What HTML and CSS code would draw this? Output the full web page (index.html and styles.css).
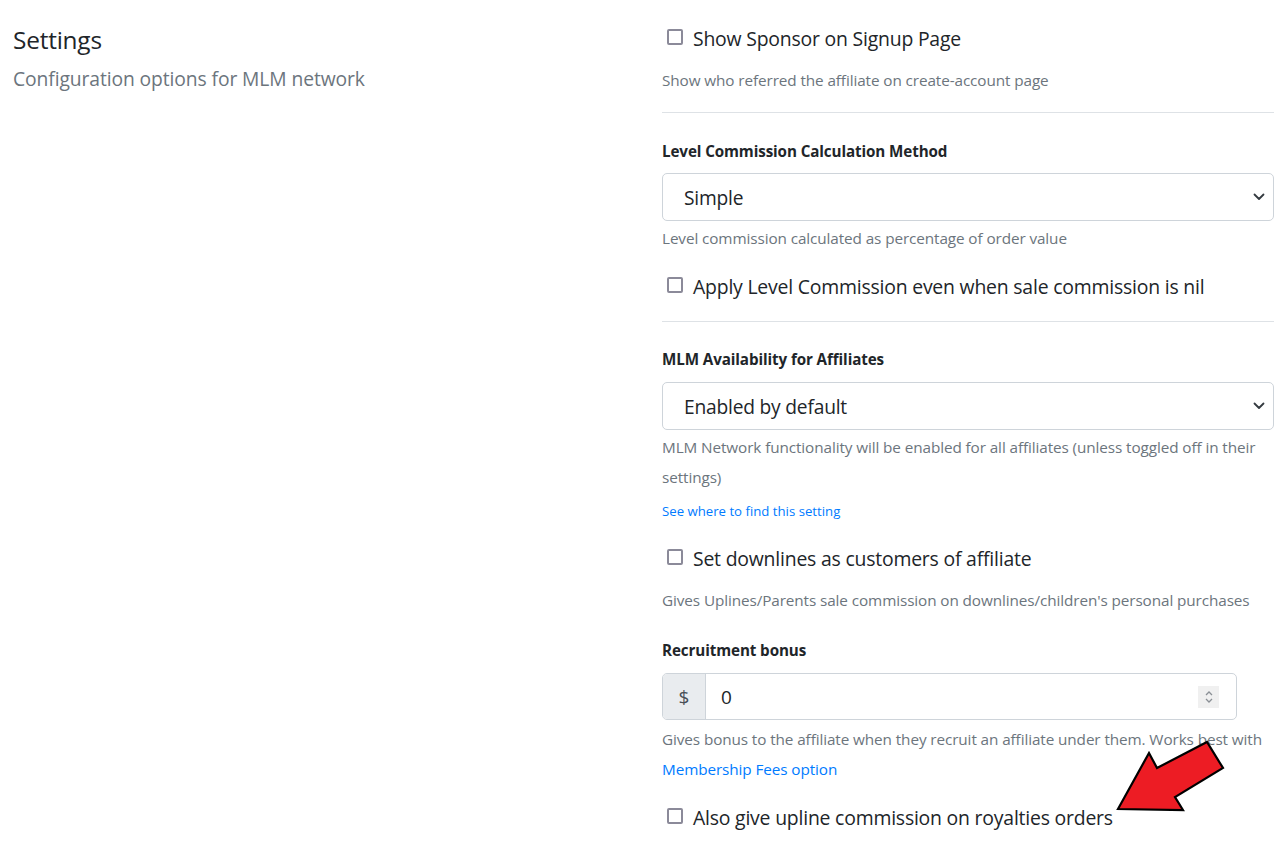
FILE: index.html
```html
<!DOCTYPE html>
<html lang="en">
<head>
<meta charset="utf-8">
<title>Settings</title>
<link rel="stylesheet" href="styles.css">
</head>
<body>
<div class="page">
  <div class="intro">
    <h2 class="title">Settings</h2>
    <p class="subtitle">Configuration options for MLM network</p>
  </div>
  <div class="form">
    <label class="check first"><input type="checkbox" class="box"><span>Show Sponsor on Signup Page</span></label>
    <p class="help h-after-check">Show who referred the affiliate on create-account page</p>
    <hr class="sep sep1">

    <div class="label l1">Level Commission Calculation Method</div>
    <div class="select">
      <span>Simple</span>
      <svg class="chev" width="12" height="8" viewBox="0 0 12 8"><path d="M1.5 1.5 L6 6 L10.5 1.5" fill="none" stroke="#343a40" stroke-width="1.8" stroke-linecap="round" stroke-linejoin="round"/></svg>
    </div>
    <p class="help h-after-input">Level commission calculated as percentage of order value</p>
    <label class="check c2"><input type="checkbox" class="box"><span>Apply Level Commission even when sale commission is nil</span></label>
    <hr class="sep sep2">

    <div class="label l2">MLM Availability for Affiliates</div>
    <div class="select">
      <span>Enabled by default</span>
      <svg class="chev" width="12" height="8" viewBox="0 0 12 8"><path d="M1.5 1.5 L6 6 L10.5 1.5" fill="none" stroke="#343a40" stroke-width="1.8" stroke-linecap="round" stroke-linejoin="round"/></svg>
    </div>
    <p class="help h-after-input">MLM Network functionality will be enabled for all affiliates (unless toggled off in their settings)</p>
    <a class="small-link" href="#">See where to find this setting</a>

    <label class="check c3"><input type="checkbox" class="box"><span>Set downlines as customers of affiliate</span></label>
    <p class="help h-after-check">Gives Uplines/Parents sale commission on downlines/children's personal purchases</p>

    <div class="label l3">Recruitment bonus</div>
    <div class="input-group">
      <span class="addon">$</span>
      <span class="value">0</span>
      <span class="spin">
        <svg width="10" height="16" viewBox="0 0 10 16"><path d="M2 6 L5 3 L8 6" fill="none" stroke="#8a8f95" stroke-width="1.3"/><path d="M2 10 L5 13 L8 10" fill="none" stroke="#8a8f95" stroke-width="1.3"/></svg>
      </span>
    </div>
    <p class="help h-after-group">Gives bonus to the affiliate when they recruit an affiliate under them. Works best with <a class="link" href="#">Membership Fees option</a></p>

    <label class="check c4"><input type="checkbox" class="box"><span>Also give upline commission on royalties orders</span></label>

    <svg class="arrow" width="130" height="80" viewBox="1110 736 130 80">
      <polygon points="1118,809 1149,753 1157,768 1207,742 1223,768 1175,797 1183,810" fill="#ed1c24" stroke="#000" stroke-width="2.2" stroke-linejoin="miter"/>
    </svg>
  </div>
</div>
</body>
</html>
```

FILE: styles.css
```css
html, body {
  margin: 0;
  padding: 0;
  background: #fff;
}
body {
  font-family: "Open Sans", "Noto Sans", "Liberation Sans", sans-serif;
  color: #212529;
}
.page {
  position: relative;
  display: grid;
  grid-template-columns: 1fr 612px;
  column-gap: 25px;
  padding: 0 12px 0 13px;
  min-height: 847px;
  box-sizing: border-box;
}
.title {
  margin: 24px 0 0 0;
  font-size: 24.4px;
  line-height: 32px;
  font-weight: 400;
  letter-spacing: -0.2px;
}
.subtitle {
  margin: 10px 0 0 0;
  font-size: 19.3px;
  line-height: 26px;
  color: #6c757d;
  letter-spacing: -0.1px;
}
.form {
  position: relative;
  padding-top: 24px;
}
.check {
  display: flex;
  align-items: center;
  font-size: 19.4px;
  line-height: 30px;
  height: 30px;
  letter-spacing: -0.2px;
  cursor: pointer;
}
.box {
  appearance: none;
  -webkit-appearance: none;
  width: 16px;
  height: 16px;
  margin: 0 10px 0 5px;
  border: 2px solid #8b8a99;
  border-radius: 2px;
  box-sizing: border-box;
  background: #fff;
  flex: none;
  position: relative;
  top: -2px;
}
.help {
  margin: 0;
  font-size: 15.3px;
  line-height: 30px;
  color: #6c757d;
  letter-spacing: -0.1px;
}
.h-after-check { margin-top: 11px; }
.h-after-input { margin-top: 2px; }
.h-after-group { margin-top: 4px; }
.sep {
  border: 0;
  border-top: 1px solid #dee2e6;
  margin: 17px 0 0 0;
  height: 0;
}
.sep2 { margin-top: 19px; }
.label {
  font-size: 15.2px;
  line-height: 22px;
  font-weight: 700;
  color: #212529;
  letter-spacing: -0.1px;
}
.l1 { margin-top: 27px; }
.l2 { margin-top: 26px; }
.l3 { margin-top: 24px; }
.select {
  margin-top: 11px;
  height: 48px;
  border: 1px solid #ced4da;
  border-radius: 5px;
  box-sizing: border-box;
  display: flex;
  align-items: center;
  justify-content: space-between;
  padding: 0 8px 0 21px;
  font-size: 19.2px;
  color: #212529;
  letter-spacing: -0.2px;
}
.l2 + .select { margin-top: 12px; }
.c2 { margin-top: 19px; }
.c3 { margin-top: 23px; }
.c4 { margin-top: 19px; }
.small-link {
  display: block;
  margin-top: 9px;
  font-size: 13.2px;
  line-height: 20px;
  color: #007bff;
  text-decoration: none;
}
.link {
  color: #007bff;
  text-decoration: none;
}
.input-group {
  margin-top: 12px;
  width: 575px;
  height: 47px;
  border: 1px solid #ced4da;
  border-radius: 5px;
  box-sizing: border-box;
  display: flex;
  align-items: stretch;
  overflow: hidden;
}
.addon {
  width: 42px;
  background: #e9ecef;
  border-right: 1px solid #ced4da;
  display: flex;
  align-items: center;
  justify-content: center;
  font-size: 19px;
  color: #495057;
  flex: none;
}
.value {
  flex: 1;
  display: flex;
  align-items: center;
  padding-left: 15px;
  font-size: 19px;
  color: #212529;
}
.spin {
  align-self: center;
  width: 21px;
  height: 22px;
  background: #f0f0f0;
  margin-right: 17px;
  display: flex;
  align-items: center;
  justify-content: center;
}
.arrow {
  position: absolute;
  left: 448px;
  top: 736px;
}
```
